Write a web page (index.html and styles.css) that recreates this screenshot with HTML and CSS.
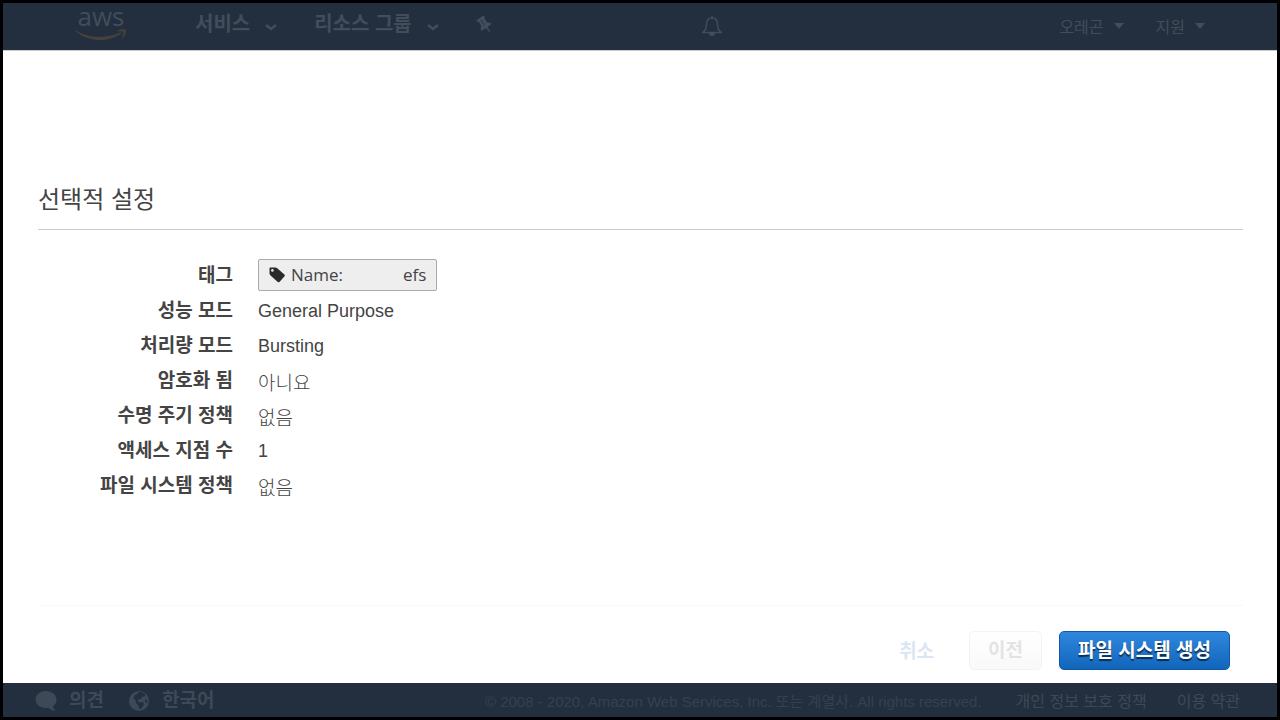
FILE: index.html
```html
<!DOCTYPE html>
<html lang="ko">
<head>
    <meta charset="UTF-8">
    <meta name="viewport" content="width=device-width, initial-scale=1.0">
    <title>파일 시스템 생성</title>
    <link rel="stylesheet" href="styles.css">
</head>
<body>

<!-- Barra superior -->
<header class="topbar">
    <a class="logo" href="#" aria-label="aws">
        <span class="logo-text">aws</span>
        <svg class="logo-smile" width="52" height="12" viewBox="0 0 52 12" fill="#46413d">
            <path d="M1 1.5C13 9 31 10 45 3.500c1.300-.5 2 .6.900 1.500C33 13.500 14 13.500.600 2.300.2 1.700.5 1.200 1 1.500z"/>
            <path d="M42.500 1.600C45 0 49.500-.3 50.600.8c.9 1.300-.2 6-3 8.500-.5.400-1 .1-.7-.4.9-2 1.900-4.900 1.400-5.900-.6-.9-3.600-.8-5.600-.6-.5 0-.6-.5-.2-.8z"/>
        </svg>
    </a>
    <nav class="main-nav">
        <a href="#">서비스 <svg class="chevron" width="12" height="7" viewBox="0 0 12 7"><path d="M1 1l5 4 5-4" fill="none" stroke="currentColor" stroke-width="2.500"/></svg></a>
        <a href="#">리소스 그룹 <svg class="chevron" width="12" height="7" viewBox="0 0 12 7"><path d="M1 1l5 4 5-4" fill="none" stroke="currentColor" stroke-width="2.500"/></svg></a>
        <a href="#" aria-label="고정">
            <svg class="pin" width="16" height="18" viewBox="0 0 16 18" fill="currentColor"><path d="M.3 5.200L7.300.5 9 2 8.500 3.500l2.700 4c1.700-.2 3.500.3 4.500 1.500l-4 2.700 2.500 5-.7.500-3.700-4.300-4.300 3c-1-1.500-1-3.300-.1-4.900L2.900 7 1 6.800z"/><path d="M5 5l3.500 5.500" stroke="#232f3e" stroke-width=".8"/></svg>
        </a>
    </nav>
    <a class="bell" href="#" aria-label="알림">
        <svg width="22" height="22" viewBox="0 0 22 22"><path d="M11 1v2M1.500 17.500c3-2 4-4.500 4-8C5.500 5 7.500 3 11 3s5.500 2 5.500 6.500c0 3.500 1 6 4 8z" fill="none" stroke="currentColor" stroke-width="1.500" stroke-linejoin="round"/><path d="M8 18h6c0 4-6 4-6 0z" fill="currentColor"/></svg>
    </a>
    <nav class="side-nav">
        <a href="#">오레곤 <svg width="10" height="6" viewBox="0 0 10 6"><path d="M0 0h10L5 6z" fill="currentColor"/></svg></a>
        <a href="#">지원 <svg width="10" height="6" viewBox="0 0 10 6"><path d="M0 0h10L5 6z" fill="currentColor"/></svg></a>
    </nav>
</header>

<main class="content">
    <h1>선택적 설정</h1>

    <!-- Resumen de la configuración -->
    <dl class="settings">
        <dt>태그</dt>
        <dd>
            <span class="tag">
                <svg width="16" height="16" viewBox="0 0 16 16" fill="#2b2b2b"><path fill-rule="evenodd" d="M.5 1.500C.5.900.900.500 1.500.5h4.700c.8 0 1.500.3 2 .7l7.200 6.200c.6.500.6 1.300.1 1.800l-4.800 5.600c-.5.600-1.300.6-1.900.1L1.300 8.200C.8 7.700.5 7 .5 6.200zM3.400 2.100a1.300 1.300 0 1 0 0 2.600 1.300 1.300 0 0 0 0-2.600z"/></svg>
                <span class="tag-key">Name:</span>
                <span class="tag-value">efs</span>
            </span>
        </dd>
        <dt>성능 모드</dt>
        <dd>General Purpose</dd>
        <dt>처리량 모드</dt>
        <dd>Bursting</dd>
        <dt>암호화 됨</dt>
        <dd class="korean">아니요</dd>
        <dt>수명 주기 정책</dt>
        <dd class="korean">없음</dd>
        <dt>액세스 지점 수</dt>
        <dd>1</dd>
        <dt>파일 시스템 정책</dt>
        <dd class="korean">없음</dd>
    </dl>

    <!-- Botones -->
    <div class="actions">
        <a class="cancel" href="#">취소</a>
        <button class="btn btn-back" type="button">이전</button>
        <button class="btn btn-create" type="button">파일 시스템 생성</button>
    </div>
</main>

<footer class="footer">
    <a class="footer-main" href="#">
        <svg width="22" height="22" viewBox="0 0 22 22" fill="currentColor"><path d="M11 1c6 0 10.500 3.700 10.500 8.500 0 2.700-1.200 5-3.300 6.500.2 2 .8 3.500 2.300 5-3 0-5.500-1.500-6.800-3.300-.9.200-1.700.3-2.700.3C5 18 .5 14.300.5 9.500S5 1 11 1z"/></svg>
        의견
    </a>
    <a class="footer-main" href="#">
        <svg width="22" height="22" viewBox="0 0 22 22"><circle cx="11" cy="11" r="10" fill="currentColor"/><path d="M10 2.500l3.500-.5 4 2.500-1 2-2.500.5-1.500 2.500-2-.5-1 2 2.500 1.500 3-.5 1 2.500-3 4.500-2-.5-.5-3-2.500-2.500-.5-3-2-2 1-3 2.500-.5zM17 9l2.500 1-.5 3.500-2-2z" fill="#232f3e"/></svg>
        한국어
    </a>
    <span class="copyright">© 2008 - 2020, Amazon Web Services, Inc. 또는 계열사. All rights reserved.</span>
    <a class="footer-link" href="#">개인 정보 보호 정책</a>
    <a class="footer-link" href="#">이용 약관</a>
</footer>

</body>
</html>
```
FILE: styles.css
```css
* {
    box-sizing: border-box;
}
body {
    margin: 0;
    min-height: 100vh;
    display: flex;
    flex-direction: column;
    border: 3px solid #000;
    background-color: #fff;
    color: #444;
    font-family: "Liberation Sans", "Noto Sans CJK KR", sans-serif;
    font-size: 18px;
}
a {
    color: inherit;
    text-decoration: none;
}
svg {
    flex-shrink: 0;
}
.topbar {
    display: flex;
    height: 48px;
    padding: 0 72px;
    background-color: #232f3e;
    border-bottom: 1px solid #ccc;
    color: #414d5a;
}
.logo {
    display: flex;
    flex-direction: column;
    align-items: center;
    width: 52px;
}
.logo-text {
    font-family: "Open Sans", sans-serif;
    font-size: 26px;
    font-weight: 500;
    line-height: 26px;
}
.main-nav {
    display: flex;
    flex: 1;
    gap: 37px;
    margin-left: 68px;
    font-size: 20px;
    font-weight: bold;
    line-height: 40px;
}
.main-nav a {
    display: flex;
    gap: 15px;
    align-items: center;
    height: 42px;
}
.chevron {
    margin-top: 6px;
}
.bell {
    margin-top: 12px;
}
.side-nav {
    display: flex;
    flex: 1;
    gap: 32px;
    justify-content: flex-end;
    margin-left: -24px;
    padding-bottom: 2px;
    font-size: 16px;
}
.side-nav a {
    display: flex;
    gap: 10px;
    align-items: center;
}
.content {
    flex: 1;
    padding: 130px 34px 0 35px;
}
h1 {
    margin: 0 0 29px;
    padding-bottom: 10px;
    border-bottom: 1px solid #ccc;
    font-size: 24px;
    font-weight: normal;
    line-height: 38px;
}
.settings {
    display: grid;
    grid-template-columns: 195px 1fr;
    column-gap: 25px;
    margin: 0;
    padding-bottom: 101px;
    border-bottom: 1px solid #f8f8f8;
    line-height: 35px;
}
.settings dt {
    font-size: 19px;
    font-weight: bold;
    line-height: 33px;
    text-align: right;
}
.settings dd {
    margin: 0;
}
.settings .korean {
    font-family: "Noto Sans CJK KR", sans-serif;
    font-size: 19px;
    font-weight: 300;
}
.tag {
    display: inline-flex;
    align-items: center;
    height: 32px;
    padding: 0 10px;
    border: 1px solid #aaa;
    border-radius: 2px;
    background-color: #eee;
    font-family: "Open Sans", sans-serif;
    font-size: 17px;
    line-height: 28px;
    vertical-align: top;
}
.tag-key {
    margin: 0 60px 0 6px;
}
.actions {
    display: flex;
    align-items: center;
    justify-content: flex-end;
    gap: 17px;
    padding: 25px 13px 13px;
}
.cancel {
    margin-right: 18px;
    padding-bottom: 3px;
    color: #dae6f4;
    font-size: 19px;
    font-weight: bold;
}
.btn {
    height: 39px;
    padding: 0 18px 4px;
    border-radius: 5px;
    font-family: inherit;
    font-size: 19px;
    font-weight: bold;
    cursor: pointer;
}
.btn-back {
    border: 1px solid #f3f3f3;
    background: linear-gradient(#fff, #f9f9f9);
    color: #e3e3e3;
}
.btn-create {
    border: 1px solid #1159a6;
    background: linear-gradient(#2f87dd, #1166bb);
    color: #fff;
    text-shadow: 0 2px 1px rgba(0, 0, 0, 0.6);
}
.footer {
    display: flex;
    align-items: center;
    height: 34px;
    padding: 0 37px 0 32px;
    background-color: #232f3e;
    color: #3d4956;
}
.footer-main {
    display: flex;
    align-items: center;
    gap: 12px;
    margin-right: 24px;
    padding-top: 2px;
    font-size: 19px;
    font-weight: bold;
    line-height: 32px;
}
.copyright {
    margin-left: auto;
    margin-right: 4px;
    color: #35414e;
    font-size: 15px;
}
.footer-link {
    margin-left: 30px;
    font-size: 16px;
}
```
